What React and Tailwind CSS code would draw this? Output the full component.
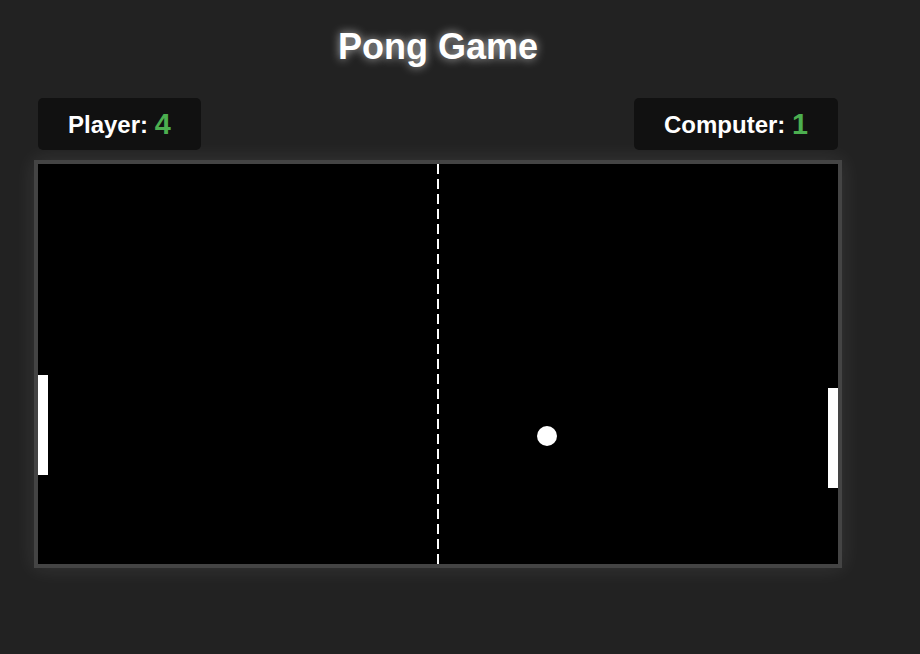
export default function App() {
  const player = 4;
  const computer = 1;
  const leftPaddleY = 211;
  const rightPaddleY = 224;
  const ball = { x: 509, y: 272, r: 10 };

  return (
    <div className="min-h-screen w-full bg-[#222222] font-['Liberation_Sans',Arial,sans-serif] text-white">
      <div className="ml-[34px] w-[808px] pt-[27px]">
        <h1 className="text-center text-[36px] font-bold leading-[40px] [text-shadow:0_0_10px_rgba(255,255,255,0.7)]">
          Pong Game
        </h1>

        <div className="mt-[31px] flex justify-between px-[4px]">
          <div className="flex h-[52px] items-center rounded-[5px] bg-[#111111] px-[30px] pt-[2px] text-[24px] font-bold">
            Player:&nbsp;<span className="text-[28.8px] text-[#4caf50]">{player}</span>
          </div>
          <div className="flex h-[52px] items-center rounded-[5px] bg-[#111111] px-[30px] pt-[2px] text-[24px] font-bold">
            Computer:&nbsp;<span className="text-[28.8px] text-[#4caf50]">{computer}</span>
          </div>
        </div>

        <div className="mt-[10px] border-4 border-[#444444] bg-black shadow-[0_0_20px_rgba(255,255,255,0.1)]">
          <svg width="800" height="400" viewBox="0 0 800 400" className="block">
            <line x1="400" y1="0" x2="400" y2="400" stroke="#fff" strokeWidth="2" strokeDasharray="10 5" />
            <rect x="0" y={leftPaddleY} width="10" height="100" fill="#fff" />
            <rect x="790" y={rightPaddleY} width="10" height="100" fill="#fff" />
            <circle cx={ball.x} cy={ball.y} r={ball.r} fill="#fff" />
          </svg>
        </div>
      </div>
    </div>
  );
}
